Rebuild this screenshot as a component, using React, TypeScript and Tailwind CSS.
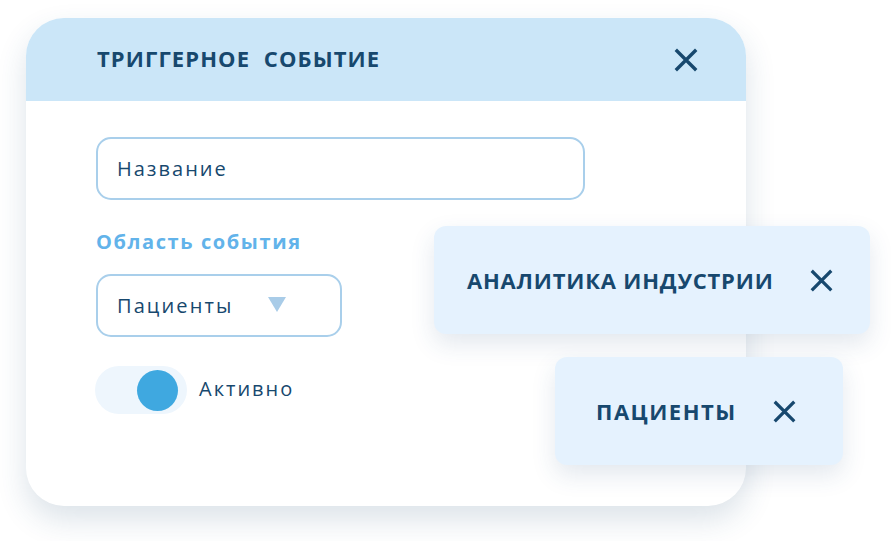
import React from "react";

const XIcon = ({ size = 24, stroke = 3.2 }: { size?: number; stroke?: number }) => (
  <svg width={size} height={size} viewBox="0 0 24 24" fill="none">
    <path d="M3 3L21 21M21 3L3 21" stroke="#17486e" strokeWidth={stroke} strokeLinecap="square" />
  </svg>
);

export default function App() {
  return (
    <div
      className="relative w-[891px] h-[541px] bg-white overflow-hidden"
      style={{ fontFamily: '"Open Sans", "Noto Sans", sans-serif' }}
    >
      <div className="ml-[26px] mt-[18px] w-[720px] h-[488px] rounded-[38px] bg-white overflow-hidden shadow-[0_14px_30px_rgba(40,80,120,0.16)] flex flex-col">
        <div className="h-[83px] bg-[#cbe6f8] flex items-center justify-between pl-[71px] pr-[48px] shrink-0">
          <span className="text-[22px] font-bold text-[#17486e] tracking-[1.1px] whitespace-pre -mt-[2px]">ТРИГГЕРНОЕ  СОБЫТИЕ</span>
          <XIcon size={24} stroke={3.4} />
        </div>
        <div className="flex flex-col pl-[70px] pt-[36px]">
          <div className="w-[489px] h-[63px] rounded-[15px] border-2 border-[#a9cfeb] flex items-center pl-[19px]">
            <span className="text-[20px] text-[#17486e] tracking-[2px]">Название</span>
          </div>
          <div className="mt-[29px] text-[20px] font-bold text-[#62b3ea] leading-[26px] tracking-[1.6px]">Область события</div>
          <div className="mt-[19px] w-[246px] h-[63px] rounded-[15px] border-2 border-[#a9cfeb] flex items-center pl-[19px]">
            <span className="text-[20px] text-[#17486e] tracking-[2.1px]">Пациенты</span>
            <svg className="ml-[35px] -mt-[2px]" width="18" height="16" viewBox="0 0 18 16">
              <path d="M0 0H18L9 15Z" fill="#a9cce8" />
            </svg>
          </div>
          <div className="mt-[29px] flex items-center">
            <div className="w-[92px] h-[48px] rounded-full bg-[#eef6fd] flex items-center justify-end pr-[9px] -ml-[1px]">
              <div className="w-[41px] h-[41px] rounded-full bg-[#3fa8e0]" />
            </div>
            <span className="ml-[12px] text-[20px] text-[#17486e] tracking-[2px] -mt-[2px]">Активно</span>
          </div>
        </div>
      </div>

      <div className="absolute left-[434px] top-[226px] w-[436px] h-[108px] rounded-[12px] bg-[#e5f2fe] shadow-[0_10px_24px_rgba(40,80,120,0.13)] flex items-center pl-[33px]">
        <span className="text-[22px] font-bold text-[#17486e] tracking-[0.8px]">АНАЛИТИКА ИНДУСТРИИ</span>
        <span className="ml-[36px] flex"><XIcon size={23} stroke={3.4} /></span>
      </div>

      <div className="absolute left-[555px] top-[357px] w-[288px] h-[108px] rounded-[12px] bg-[#e5f2fe] shadow-[0_10px_24px_rgba(40,80,120,0.13)] flex items-center pl-[41px]">
        <span className="text-[22px] font-bold text-[#17486e] tracking-[1.5px]">ПАЦИЕНТЫ</span>
        <span className="ml-[36px] flex"><XIcon size={23} stroke={3.4} /></span>
      </div>
    </div>
  );
}
